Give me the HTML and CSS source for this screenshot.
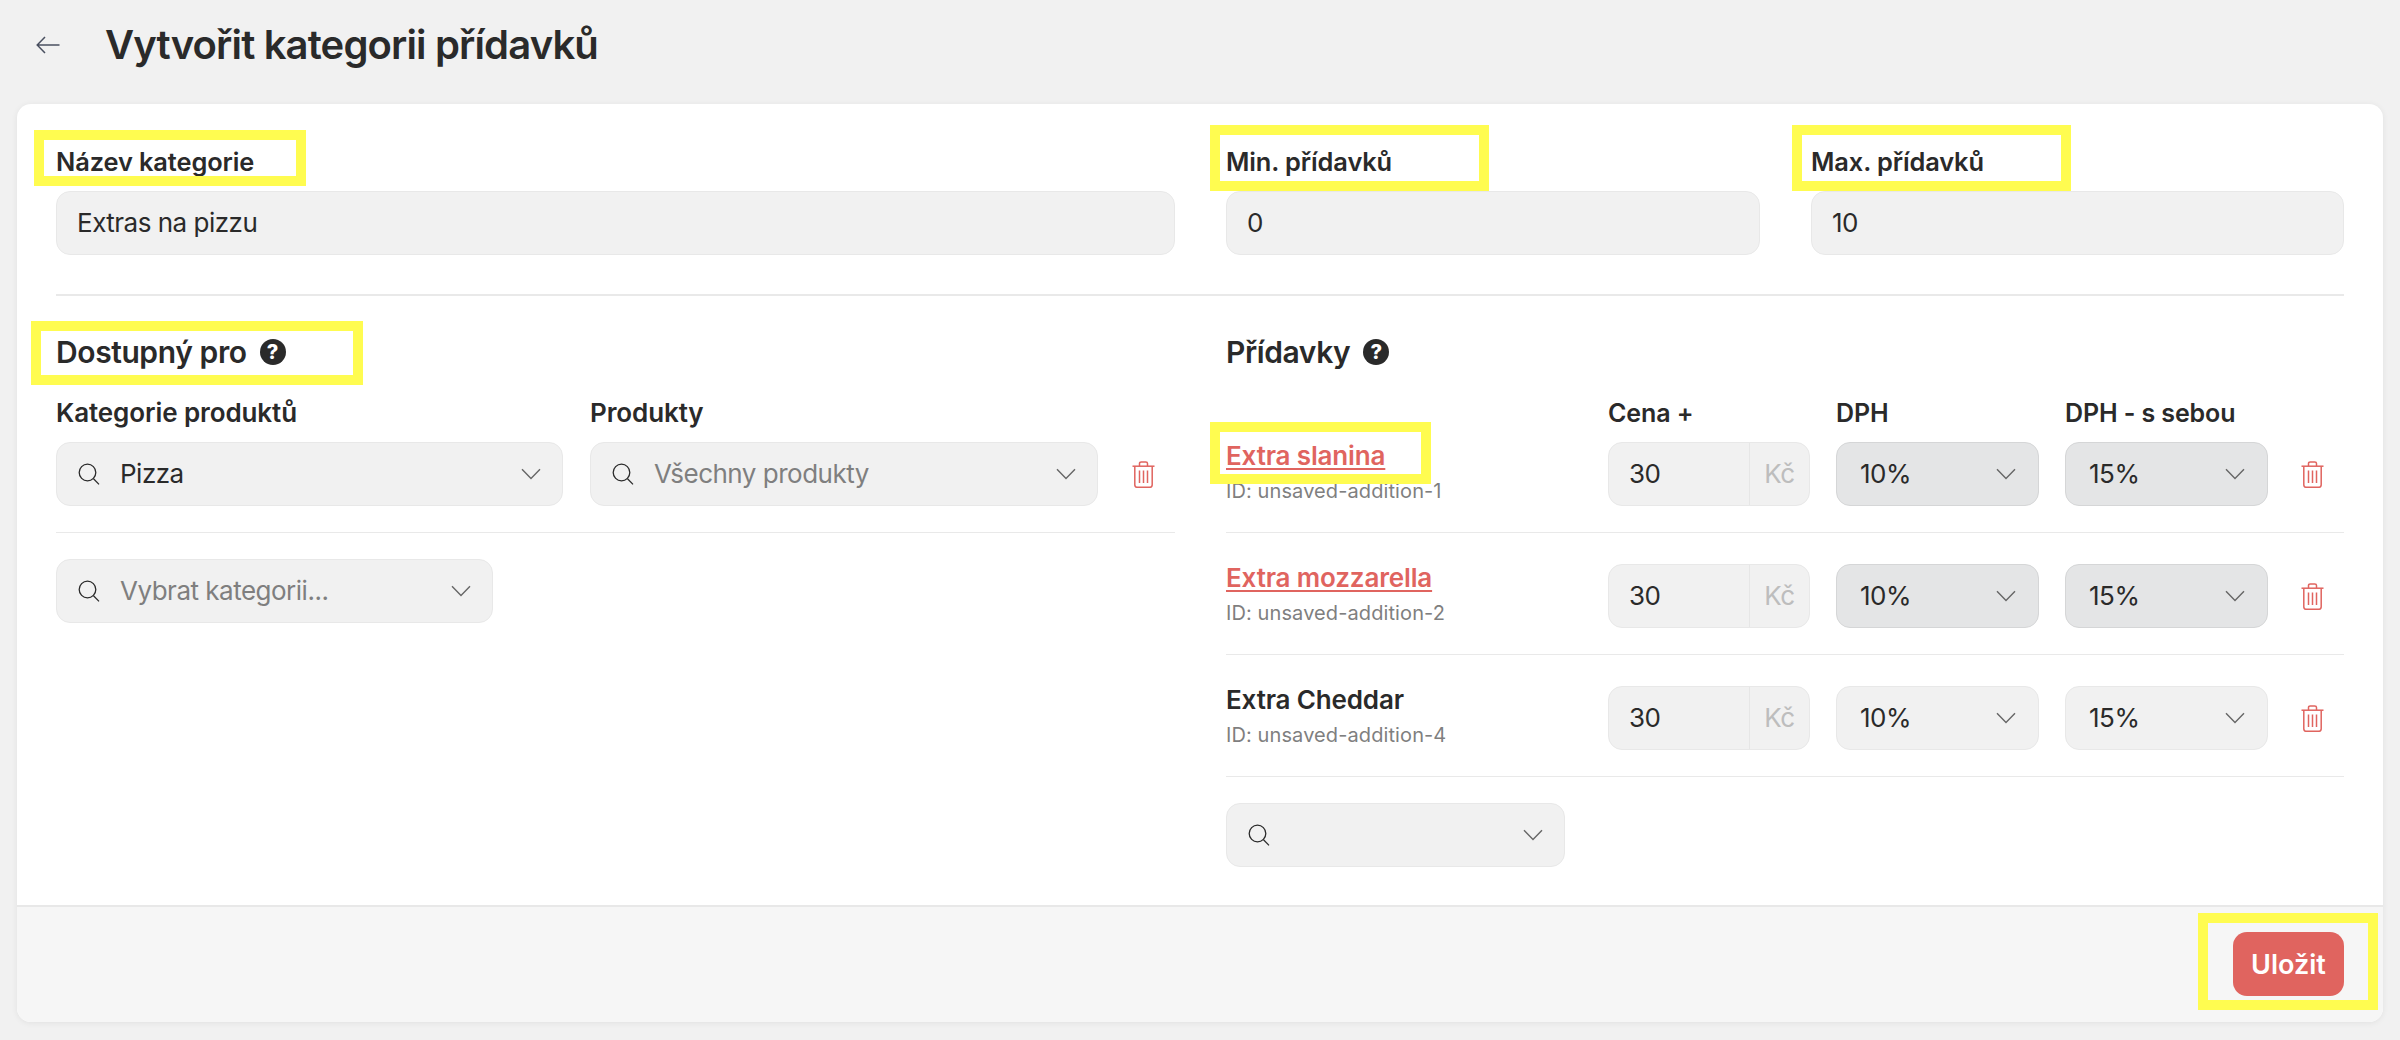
FILE: index.html
```html
<!DOCTYPE html>
<html lang="cs">
<head>
  <meta charset="UTF-8" />
  <title>Vytvořit kategorii přídavků</title>
  <link rel="stylesheet" href="styles.css">
</head>
<body>
  <svg class="sprite" width="0" height="0">
    <symbol id="i-search" viewBox="0 0 22 22">
      <circle cx="9.5" cy="9.5" r="8.3" fill="none" stroke="currentColor" stroke-width="1.3"/>
      <path d="M15.5 15.8 21 21.4" fill="none" stroke="currentColor" stroke-width="1.3"/>
    </symbol>
    <symbol id="i-chevron" viewBox="0 0 20 12">
      <path d="M1 1.2 10 10.6 19 1.2" fill="none" stroke="currentColor" stroke-width="1.4"/>
    </symbol>
    <symbol id="i-trash" viewBox="0 0 23 27">
      <g fill="none" stroke="currentColor" stroke-width="1.5">
        <path d="M.5 5.2h22"/>
        <path d="M7.5 5V2.6c0-1 .7-1.700 1.700-1.700h4.600c1 0 1.700.7 1.700 1.700V5"/>
        <path d="M2.800 5.200v18.500c0 1.600 1.200 2.600 2.600 2.600h12.200c1.400 0 2.600-1 2.600-2.600V5.200"/>
        <path d="M7.500 9.500v12.500M11.500 9.500v12.500M15.500 9.500v12.500"/>
      </g>
    </symbol>
  </svg>

  <header class="top">
    <svg class="back" viewBox="0 0 24 18" width="24" height="18">
      <path d="M23.500 9H1.500M9 1 1.200 9 9 17" fill="none" stroke="#4a5060" stroke-width="1.500"/>
    </svg>
    <h1>Vytvořit kategorii přídavků</h1>
  </header>

  <main class="card">
    <div class="card-body">
      <div class="columns basics">
        <div>
          <div class="label">Název kategorie</div>
          <div class="field">Extras na pizzu</div>
        </div>
        <div class="limits">
          <div>
            <div class="label">Min. přídavků</div>
            <div class="field">0</div>
          </div>
          <div>
            <div class="label">Max. přídavků</div>
            <div class="field">10</div>
          </div>
        </div>
      </div>

      <div class="columns">
        <section>
          <h2>Dostupný pro <span class="help">?</span></h2>
          <div class="scope-row">
            <div>
              <div class="label">Kategorie produktů</div>
              <div class="field select">
                <svg class="ico-search"><use href="#i-search"/></svg>
                <span class="grow">Pizza</span>
                <svg class="ico-chevron"><use href="#i-chevron"/></svg>
              </div>
            </div>
            <div>
              <div class="label">Produkty</div>
              <div class="field select">
                <svg class="ico-search"><use href="#i-search"/></svg>
                <span class="grow muted">Všechny produkty</span>
                <svg class="ico-chevron"><use href="#i-chevron"/></svg>
              </div>
            </div>
            <svg class="ico-trash"><use href="#i-trash"/></svg>
          </div>
          <div class="field select add-category">
            <svg class="ico-search"><use href="#i-search"/></svg>
            <span class="grow muted">Vybrat kategorii...</span>
            <svg class="ico-chevron"><use href="#i-chevron"/></svg>
          </div>
        </section>

        <section>
          <h2>Přídavky <span class="help">?</span></h2>
          <div class="addition-head">
            <span></span>
            <div class="label">Cena +</div>
            <div class="label">DPH</div>
            <div class="label">DPH - s sebou</div>
          </div>

          <div class="addition">
            <div>
              <a class="name changed" href="#">Extra slanina</a>
              <div class="id">ID: unsaved-addition-1</div>
            </div>
            <div class="field price"><span class="grow">30</span><span class="unit">Kč</span></div>
            <div class="field select vat changed-vat"><span class="grow">10%</span><svg class="ico-chevron"><use href="#i-chevron"/></svg></div>
            <div class="field select vat changed-vat"><span class="grow">15%</span><svg class="ico-chevron"><use href="#i-chevron"/></svg></div>
            <svg class="ico-trash"><use href="#i-trash"/></svg>
          </div>

          <div class="addition">
            <div>
              <a class="name changed" href="#">Extra mozzarella</a>
              <div class="id">ID: unsaved-addition-2</div>
            </div>
            <div class="field price"><span class="grow">30</span><span class="unit">Kč</span></div>
            <div class="field select vat changed-vat"><span class="grow">10%</span><svg class="ico-chevron"><use href="#i-chevron"/></svg></div>
            <div class="field select vat changed-vat"><span class="grow">15%</span><svg class="ico-chevron"><use href="#i-chevron"/></svg></div>
            <svg class="ico-trash"><use href="#i-trash"/></svg>
          </div>

          <div class="addition">
            <div>
              <a class="name" href="#">Extra Cheddar</a>
              <div class="id">ID: unsaved-addition-4</div>
            </div>
            <div class="field price"><span class="grow">30</span><span class="unit">Kč</span></div>
            <div class="field select vat"><span class="grow">10%</span><svg class="ico-chevron"><use href="#i-chevron"/></svg></div>
            <div class="field select vat"><span class="grow">15%</span><svg class="ico-chevron"><use href="#i-chevron"/></svg></div>
            <svg class="ico-trash"><use href="#i-trash"/></svg>
          </div>

          <div class="field select add-addition">
            <svg class="ico-search"><use href="#i-search"/></svg>
            <span class="grow"></span>
            <svg class="ico-chevron"><use href="#i-chevron"/></svg>
          </div>
        </section>
      </div>
    </div>

    <footer class="card-foot">
      <button type="button" class="save">Uložit</button>
    </footer>
  </main>

  <!-- yellow highlight frames drawn over the screenshot -->
  <div class="mark mark-name"></div>
  <div class="mark mark-min"></div>
  <div class="mark mark-max"></div>
  <div class="mark mark-scope"></div>
  <div class="mark mark-bacon"></div>
  <div class="mark mark-save"></div>
</body>
</html>
```

FILE: styles.css
```css
* {
  box-sizing: border-box;
}

body {
  margin: 0;
  height: 1040px;
  overflow: hidden;
  background: #f1f1f1;
  color: #2a2a2a;
  font-family: Inter, "Noto Sans", sans-serif;
}

.sprite {
  display: block;
  height: 0;
}

.top {
  height: 104px;
  padding: 0 0 14px 36px;
  display: flex;
  align-items: center;
}

.back {
  flex: none;
}

h1 {
  margin: 0 0 0 45px;
  font-size: 40px;
  font-weight: 600;
  letter-spacing: -0.85px;
  line-height: 48px;
}

.card {
  margin: 0 17px;
  height: 918px;
  background: #fff;
  border-radius: 14px;
  box-shadow: 0 1px 6px rgba(0,0,0,0.07);
  display: flex;
  flex-direction: column;
  overflow: hidden;
}

.card-body {
  flex: 1;
  padding: 43px 39px 0;
}

.card-foot {
  height: 117px;
  padding: 25px 39px 0 0;
  background: #f6f6f6;
  border-top: 2px solid #e8e8e8;
  display: flex;
  justify-content: flex-end;
  align-items: flex-start;
}

.columns {
  display: grid;
  grid-template-columns: 1119px 1118px;
  gap: 51px;
}

.basics {
  padding-bottom: 39px;
  border-bottom: 2px solid #e9e9e9;
  margin-bottom: 41px;
}

.limits {
  display: grid;
  grid-template-columns: 534px 533px;
  gap: 51px;
}

.label {
  height: 30px;
  margin-bottom: 14px;
  font-size: 25.4px;
  font-weight: 600;
  line-height: 30px;
  letter-spacing: -0.1px;
  white-space: nowrap;
}

.scope-row .label {
  font-size: 26px;
}

.addition-head .label {
  font-size: 25px;
}

h2 {
  margin: 0 0 31px;
  height: 30px;
  font-size: 30px;
  font-weight: 600;
  line-height: 30px;
  letter-spacing: -0.4px;
  display: flex;
  align-items: center;
  gap: 13px;
}

.help {
  width: 26px;
  height: 26px;
  border-radius: 50%;
  background: #2a2a2a;
  color: #fff;
  font-size: 20px;
  font-weight: 800;
  letter-spacing: 0;
  display: flex;
  align-items: center;
  justify-content: center;
}

.field {
  height: 64px;
  padding: 0 20px;
  background: #f1f1f1;
  border: 1px solid #e8e8e8;
  border-radius: 14px;
  font-size: 26px;
  letter-spacing: -0.5px;
  line-height: 62px;
  white-space: nowrap;
}

.select {
  display: flex;
  align-items: center;
  padding: 0 21px;
}

.grow {
  flex: 1;
}

.muted {
  color: #7f7f7f;
}

.ico-search {
  flex: none;
  width: 22px;
  height: 22px;
  margin-right: 20px;
  color: #2a2a2a;
}

.ico-chevron {
  flex: none;
  width: 20px;
  height: 12px;
  color: #666;
}

.ico-trash {
  flex: none;
  width: 23px;
  height: 27px;
  color: #e0645f;
  margin-left: 7px;
  align-self: center;
}

.scope-row {
  display: grid;
  grid-template-columns: 507px 508px 50px;
  gap: 27px;
  padding-bottom: 26px;
  border-bottom: 1px solid #e9e9e9;
  margin-bottom: 26px;
}

.scope-row .ico-trash {
  align-self: end;
  margin-bottom: 18px;
}

.add-category {
  width: 437px;
}

.addition-head,
.addition {
  display: grid;
  grid-template-columns: 356px 202px 203px 203px 50px;
  column-gap: 26px;
}

.addition {
  padding-bottom: 26px;
  border-bottom: 1px solid #e9e9e9;
}

.addition + .addition {
  margin-top: 31px;
}

.name {
  display: block;
  height: 28px;
  font-size: 26px;
  font-weight: 600;
  line-height: 28px;
  letter-spacing: -0.15px;
  color: #2a2a2a;
  text-decoration: none;
}

.name.changed {
  color: #e0645f;
  text-decoration: underline;
  text-underline-offset: 3px;
}

.id {
  margin-top: 9px;
  font-size: 20px;
  line-height: 24px;
  letter-spacing: 0.1px;
  color: #7f7f7f;
}

.price {
  display: flex;
  padding-right: 0;
}

.unit {
  width: 60px;
  text-align: center;
  color: #bdbdbd;
  border-left: 1px solid #e6e6e6;
}

.vat {
  padding: 0 22px 0 23px;
}

.changed-vat {
  background: #e4e5e6;
  border-color: #d5d6d7;
}

.add-addition {
  width: 339px;
  margin-top: 26px;
}

.save {
  width: 111px;
  height: 64px;
  padding: 0;
  border: none;
  border-radius: 14px;
  background: #e0645f;
  color: #fff;
  font-family: inherit;
  font-size: 27px;
  font-weight: 600;
}

.mark {
  position: absolute;
  border: 10px solid #fffc50;
}

.mark-name { left: 34px; top: 130px; width: 272px; height: 56px; }
.mark-min { left: 1210px; top: 125px; width: 279px; height: 66px; }
.mark-max { left: 1792px; top: 125px; width: 279px; height: 66px; }
.mark-scope { left: 31px; top: 321px; width: 332px; height: 64px; }
.mark-bacon { left: 1210px; top: 422px; width: 221px; height: 62px; }
.mark-save { left: 2198px; top: 913px; width: 180px; height: 97px; }
```
